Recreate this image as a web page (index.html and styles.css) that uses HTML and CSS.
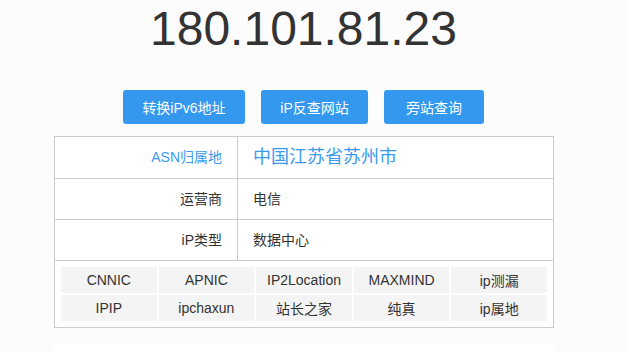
FILE: index.html
```html
<!DOCTYPE html>
<html lang="zh-CN">
<head>
<meta charset="utf-8">
<title>180.101.81.23</title>
<link rel="stylesheet" href="styles.css">
</head>
<body>
<div class="page">
  <h1 class="ip">180.101.81.23</h1>
  <div class="actions">
    <a class="btn btn-wide">转换iPv6地址</a>
    <a class="btn">iP反查网站</a>
    <a class="btn btn-narrow">旁站查询</a>
  </div>
  <div class="info">
    <div class="row row-main">
      <div class="label accent">ASN归属地</div>
      <div class="value accent big">中国江苏省苏州市</div>
    </div>
    <div class="row">
      <div class="label">运营商</div>
      <div class="value">电信</div>
    </div>
    <div class="row">
      <div class="label">iP类型</div>
      <div class="value">数据中心</div>
    </div>
    <div class="links">
      <span class="link">CNNIC</span>
      <span class="link">APNIC</span>
      <span class="link">IP2Location</span>
      <span class="link">MAXMIND</span>
      <span class="link">ip测漏</span>
      <span class="link">IPIP</span>
      <span class="link">ipchaxun</span>
      <span class="link">站长之家</span>
      <span class="link">纯真</span>
      <span class="link">ip属地</span>
    </div>
  </div>
  <div class="panel"></div>
</div>
</body>
</html>
```

FILE: styles.css
```css
html, body {
  margin: 0;
  padding: 0;
  background: #fcfcfc;
}
body {
  font-family: "Liberation Sans", "Noto Sans CJK SC", Arial, sans-serif;
  color: #333;
  font-size: 14px;
}
.page {
  width: 607px;
  padding-top: 1px;
}
.ip {
  margin: 0;
  text-align: center;
  font-size: 48px;
  font-weight: normal;
  line-height: 55px;
  color: #333;
}
.actions {
  display: flex;
  justify-content: center;
  gap: 16px;
  margin-top: 34px;
}
.btn {
  display: flex;
  align-items: center;
  justify-content: center;
  height: 34px;
  padding: 0;
  white-space: nowrap;
  background: #3498ef;
  color: #fff;
  border-radius: 3px;
  font-size: 14px;
  box-sizing: border-box;
  width: 107px;
}
.btn-wide { width: 122px; }
.btn-narrow { width: 100px; }
.info {
  width: 500px;
  margin: 12px 0 0 54px;
  box-sizing: border-box;
  border: 1px solid #cccccc;
  background: #fff;
}
.row {
  display: grid;
  grid-template-columns: 183px 1fr;
  height: 40px;
  border-bottom: 1px solid #cccccc;
  line-height: 1;
}
.row-main { height: 41px; }
.label {
  display: flex;
  align-items: center;
  justify-content: flex-end;
  padding-right: 15px;
  padding-bottom: 1px;
  border-right: 1px solid #cccccc;
}
.value {
  display: flex;
  align-items: center;
  padding-left: 15px;
  padding-bottom: 1px;
}
.accent { color: #3a9af0; }
.big { font-size: 18px; }
.links {
  display: grid;
  grid-template-columns: repeat(5, 1fr);
  gap: 2px;
  padding: 6px;
}
.link {
  display: flex;
  align-items: center;
  justify-content: center;
  height: 26px;
  background: #f4f4f4;
  color: #333;
  font-size: 14px;
}
.panel {
  width: 500px;
  height: 20px;
  margin: 15px 0 0 54px;
  background: #fff;
}
```
